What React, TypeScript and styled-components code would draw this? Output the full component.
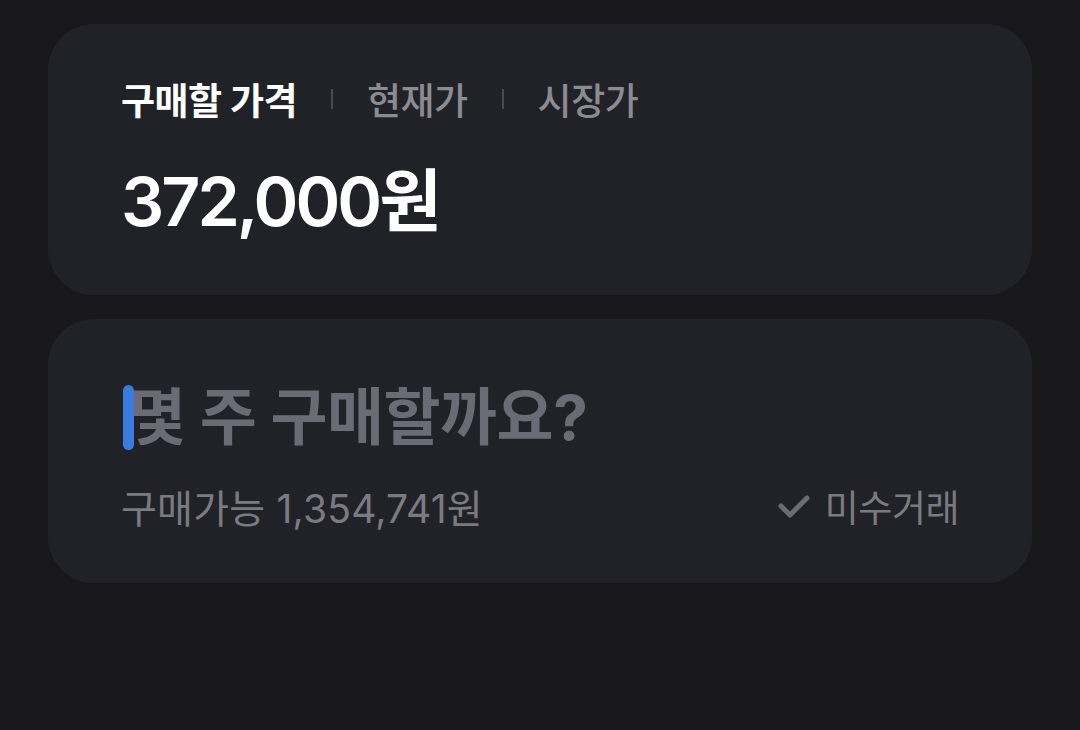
import React from "react";
import styled, { createGlobalStyle } from "styled-components";

const Global = createGlobalStyle`
  html, body { margin: 0; padding: 0; background: #18181c; }
  body { font-family: Inter, "Noto Sans CJK KR", "Noto Sans", sans-serif; }
`;

const Page = styled.div`
  width: 1080px;
  height: 730px;
  background: #18181c;
  padding: 24px 48px 0;
  box-sizing: border-box;
  display: flex;
  flex-direction: column;
  gap: 24px;
`;

const Card = styled.section<{ $h: number }>`
  background: #212227;
  border-radius: 46px;
  height: ${(p) => p.$h}px;
  box-sizing: border-box;
  padding: 0 73px;
  display: flex;
  flex-direction: column;
`;

const Tabs = styled.div`
  display: flex;
  align-items: center;
  margin-top: 50px;
  height: 50px;
`;

const Tab = styled.span<{ $active?: boolean }>`
  font-size: 37px;
  font-weight: ${(p) => (p.$active ? 700 : 500)};
  color: ${(p) => (p.$active ? "#ffffff" : "#8b8c93")};
  letter-spacing: -0.5px;
`;

const Sep = styled.span`
  width: 2px;
  height: 20px;
  background: #4a4b52;
  margin: 0 34px;
`;

const Price = styled.div`
  margin-top: 32px;
  font-size: 68px;
  font-weight: 600;
  color: #ffffff;
  letter-spacing: -3px;
  line-height: 90px;
`;

const InputRow = styled.div`
  display: flex;
  align-items: center;
  margin-top: 57px;
  height: 74px;
  position: relative;
`;

const Cursor = styled.span`
  position: absolute;
  left: 2px;
  top: 9px;
  width: 11px;
  height: 65px;
  border-radius: 6px;
  background: #3a7be0;
`;

const Placeholder = styled.span`
  font-size: 62px;
  font-weight: 700;
  color: #6a6b74;
  letter-spacing: -0.5px;
  padding-left: 8px;
`;

const Bottom = styled.div`
  display: flex;
  align-items: center;
  justify-content: space-between;
  margin-top: 28px;
`;

const Available = styled.span`
  font-size: 39px;
  font-weight: 400;
  color: #7a7b82;
  letter-spacing: 0.2px;
`;

const Check = styled.label`
  display: flex;
  align-items: center;
  gap: 14px;
  font-size: 37px;
  color: #7a7b82;
  letter-spacing: -0.5px;
`;

export default function App() {
  return (
    <>
      <Global />
      <Page>
        <Card $h={271}>
          <Tabs>
            <Tab $active>구매할 가격</Tab>
            <Sep />
            <Tab>현재가</Tab>
            <Sep />
            <Tab>시장가</Tab>
          </Tabs>
          <Price>372,000원</Price>
        </Card>
        <Card $h={264}>
          <InputRow>
            <Cursor />
            <Placeholder>몇 주 구매할까요?</Placeholder>
          </InputRow>
          <Bottom>
            <Available>구매가능 1,354,741원</Available>
            <Check>
              <svg width="34" height="26" viewBox="0 0 34 26">
                <path d="M4 13 L13 22 L30 5" fill="none" stroke="#6a6b74" strokeWidth="5" strokeLinecap="round" strokeLinejoin="round" />
              </svg>
              미수거래
            </Check>
          </Bottom>
        </Card>
      </Page>
    </>
  );
}
